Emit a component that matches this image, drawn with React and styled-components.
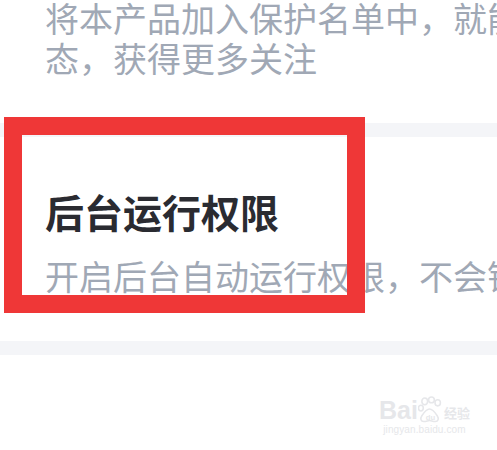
import React from 'react';
import styled, { createGlobalStyle } from 'styled-components';

const GlobalStyle = createGlobalStyle`
  html, body {
    margin: 0;
    padding: 0;
    background: #ffffff;
  }
  body {
    font-family: "Noto Sans CJK SC", "Noto Sans", sans-serif;
    overflow: hidden;
  }
`;

const Page = styled.div`
  position: relative;
  width: 497px;
  height: 450px;
  overflow: hidden;
  background: #ffffff;
`;

const Intro = styled.div`
  padding: 0 0 0 45px;
  margin-top: -2px;
  height: 125px;
`;

const Desc = styled.p`
  margin: 0;
  font-size: 34px;
  line-height: 40px;
  color: #a0a8b5;
  white-space: nowrap;
`;

const Divider = styled.div`
  height: 14px;
  background: #f4f5f8;
`;

const Item = styled.div`
  padding: 50px 0 45px 45px;
`;

const Title = styled.h2`
  margin: 0;
  font-size: 39px;
  line-height: 48px;
  font-weight: 700;
  color: #2a2b31;
  white-space: nowrap;
  margin-bottom: 21px;
`;

const Highlight = styled.div`
  position: absolute;
  left: 4px;
  top: 117px;
  width: 325px;
  height: 160px;
  border: 18px solid #ef3737;
`;

const Watermark = styled.div`
  position: absolute;
  left: 379px;
  top: 396px;
  display: flex;
  flex-direction: column;
  align-items: center;
  color: #e6e7ea;
  font-family: "Liberation Sans", sans-serif;
  white-space: nowrap;
`;

const Brand = styled.div`
  display: flex;
  align-items: flex-end;
  font-size: 25px;
  font-weight: 700;
  line-height: 28px;
`;

const BrandCn = styled.span`
  font-family: "Noto Sans CJK SC", sans-serif;
  font-size: 13px;
  line-height: 22px;
  font-weight: 700;
  margin-left: 1px;
`;

const Site = styled.div`
  font-size: 10px;
  line-height: 12px;
  letter-spacing: 0.1px;
`;

function Paw() {
  return (
    <svg width="25" height="28" viewBox="0 0 26 28" fill="none">
      <ellipse cx="7" cy="5" rx="3" ry="3.5" stroke="#e6e7ea" strokeWidth="1.6" />
      <ellipse cx="14" cy="3.5" rx="3" ry="3" stroke="#e6e7ea" strokeWidth="1.6" />
      <ellipse cx="20.5" cy="6.5" rx="2.8" ry="3.2" stroke="#e6e7ea" strokeWidth="1.6" />
      <ellipse cx="3" cy="12" rx="2.5" ry="3" stroke="#e6e7ea" strokeWidth="1.6" />
      <path
        d="M6 26c-3 0-4-3-2-6 2-3 5-7 8-7s6 4 8 7c2 3 1 6-2 6-3 0-4-1-6-1s-3 1-6 1z"
        stroke="#e6e7ea"
        strokeWidth="1.6"
      />
      <text x="8" y="24" fontSize="8" fontWeight="700" fill="#e6e7ea" fontFamily="Liberation Sans, sans-serif">du</text>
    </svg>
  );
}

export default function App() {
  return (
    <Page>
      <GlobalStyle />
      <Intro>
        <Desc>将本产品加入保护名单中，就能保持在线状</Desc>
        <Desc>态，获得更多关注</Desc>
      </Intro>
      <Divider />
      <Item>
        <Title>后台运行权限</Title>
        <Desc>开启后台自动运行权限，不会错过消息</Desc>
      </Item>
      <Divider />
      <Highlight />
      <Watermark>
        <Brand>
          Bai
          <Paw />
          <BrandCn>经验</BrandCn>
        </Brand>
        <Site>jingyan.baidu.com</Site>
      </Watermark>
    </Page>
  );
}
